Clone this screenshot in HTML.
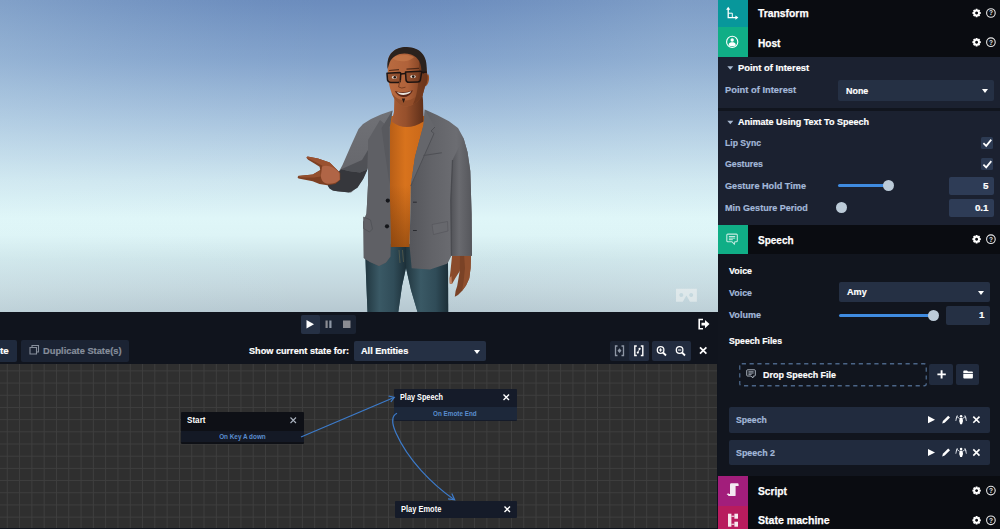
<!DOCTYPE html>
<html lang="en">
<head>
<meta charset="utf-8">
<title>Host editor</title>
<style>
*{box-sizing:border-box;margin:0;padding:0}
html,body{width:1000px;height:529px;overflow:hidden;background:#10141d}
body{position:relative;font-family:"Liberation Sans",sans-serif;font-weight:bold;color:#fff;font-size:11px}
.abs{position:absolute}
#viewport{left:0;top:0;width:718px;height:312px;overflow:hidden;
 background:linear-gradient(90deg,rgba(224,247,248,0.193) 0.00%,rgba(224,247,248,0.158) 6.27%,rgba(224,247,248,0.123) 12.53%,rgba(224,247,248,0.091) 18.80%,rgba(224,247,248,0.061) 25.07%,rgba(224,247,248,0.035) 31.34%,rgba(224,247,248,0.016) 37.60%,rgba(224,247,248,0.004) 43.87%,rgba(224,247,248,0.000) 50.14%,rgba(224,247,248,0.004) 56.41%,rgba(224,247,248,0.017) 62.67%,rgba(224,247,248,0.036) 68.94%,rgba(224,247,248,0.062) 75.21%,rgba(224,247,248,0.092) 81.48%,rgba(224,247,248,0.125) 87.74%,rgba(224,247,248,0.160) 94.01%),linear-gradient(180deg,#6b8cbd 0%,#6e8fbf 2.6%,#83a3cc 19.2%,#a7c3de 38.5%,#cde5ef 57.7%,#dff6f8 70%,#ddf4f6 75.3%,#cde4e9 83.3%,#c2d5dc 93%,#b6c8d1 100%)}
#playbar{left:0;top:312px;width:718px;height:26px;background:#10141d}
#toolbar{left:0;top:338px;width:718px;height:26px;background:#10141d}
#graph{left:0;top:364px;width:717px;height:164px;background-color:#2f2f2f;
 background-image:linear-gradient(90deg,#3e3e3e 1px,transparent 1px),linear-gradient(180deg,#3e3e3e 1px,transparent 1px);
 background-size:12.3px 12.2px;background-position:6.8px 6.4px;overflow:hidden}
#panel{left:718px;top:0;width:282px;height:529px;background:#10141d;overflow:hidden}
.hdr{left:0;width:282px;height:29.5px;background:#0a0c11}
.hdr .ic{position:absolute;left:0;top:0;width:30px;height:100%}
.hdr .tt{position:absolute;left:40px;top:1.5px;line-height:29px;font-size:11.5px;color:#fff;-webkit-text-stroke:.25px #fff}
.sec{left:0;width:282px;background:#1b2130}
.lbl{position:absolute;color:#a3b8d9;font-size:9.8px;-webkit-text-stroke:.2px #a3b8d9;line-height:14px;white-space:nowrap}
.hd{position:absolute;color:#fff;font-size:9.8px;-webkit-text-stroke:.2px #fff;line-height:14px;white-space:nowrap}
.sel{position:absolute;background:#253044;border-radius:2px;color:#fff;font-size:9.8px;-webkit-text-stroke:.2px #fff}
.sel>span{position:absolute;left:8px;top:0}
.sel i{position:absolute;right:6px;width:0;height:0;border-left:3.5px solid transparent;border-right:3.5px solid transparent;border-top:4px solid #fff}
.num{position:absolute;background:#2e3c56;border-radius:2px;color:#fff;font-size:9.8px;-webkit-text-stroke:.2px #fff;text-align:right;padding-right:5px}
.trk{position:absolute;height:3px;border-radius:2px;background:#3f8be0}
.thumb{position:absolute;width:11px;height:11px;border-radius:50%;background:#bccbd8}
.chk{position:absolute;width:12px;height:12px;background:#2c3a52;border-radius:1.5px}
.btn{position:absolute;background:#1f2838;border-radius:2px}
.node{position:absolute;background:#0e1016;border-radius:1px}
.node .t{position:absolute;left:6px;top:0;font-size:9px;color:#fff;white-space:nowrap}
.node .tr{position:absolute;left:0;right:0;font-size:7.5px;color:#5b8ed0;text-align:center;white-space:nowrap}
.x{display:inline-block;transform-origin:0 50%;transform:scaleX(var(--k,1));white-space:nowrap}
.xc{display:inline-block;transform-origin:50% 50%;transform:scaleX(var(--k,1));white-space:nowrap}
svg{position:absolute;overflow:visible}
</style>
</head>
<body>
<!-- 3D viewport -->
<div id="viewport" class="abs">
<!--CHARACTER-->
<svg style="left:0;top:0" width="718" height="312" viewBox="0 0 718 312">
<defs>
<linearGradient id="gj" x1="0" y1="0" x2="1" y2="0"><stop offset="0" stop-color="#55565b"/><stop offset=".35" stop-color="#626368"/><stop offset=".75" stop-color="#6c6d72"/><stop offset="1" stop-color="#5c5d62"/></linearGradient>
<linearGradient id="gjl" x1="0" y1="0" x2="0" y2="1"><stop offset="0" stop-color="#707176"/><stop offset=".5" stop-color="#64656a"/><stop offset="1" stop-color="#4e4f54"/></linearGradient>
<linearGradient id="gjs" x1="0" y1="0" x2="1" y2="0"><stop offset="0" stop-color="#505156"/><stop offset=".4" stop-color="#696a6f"/><stop offset="1" stop-color="#55565b"/></linearGradient>
<linearGradient id="gsh" x1="0" y1="0" x2="1" y2="0"><stop offset="0" stop-color="#b65d16"/><stop offset=".45" stop-color="#d8731d"/><stop offset="1" stop-color="#c9681a"/></linearGradient>
<linearGradient id="gjn" x1="0" y1="0" x2="1" y2="0"><stop offset="0" stop-color="#21363f"/><stop offset=".35" stop-color="#3a5965"/><stop offset=".7" stop-color="#304c58"/><stop offset="1" stop-color="#1c2f38"/></linearGradient>
<linearGradient id="gsk" x1="0" y1="0" x2="1" y2="0"><stop offset="0" stop-color="#b96b40"/><stop offset=".5" stop-color="#b0623a"/><stop offset=".8" stop-color="#8a4827"/><stop offset="1" stop-color="#6b361d"/></linearGradient>
<linearGradient id="gnk" x1="0" y1="0" x2="1" y2="0"><stop offset="0" stop-color="#a85c34"/><stop offset=".45" stop-color="#96502c"/><stop offset="1" stop-color="#5e2f19"/></linearGradient><linearGradient id="gnk2" x1="0" y1="0" x2="0" y2="1"><stop offset="0" stop-color="#4a2210" stop-opacity=".75"/><stop offset=".6" stop-color="#4a2210" stop-opacity="0"/></linearGradient>
<linearGradient id="ghd" x1="0" y1="0" x2="0" y2="1"><stop offset="0" stop-color="#b36638"/><stop offset="1" stop-color="#6b361c"/></linearGradient>
<linearGradient id="gshd" x1="0" y1="0" x2="0" y2="1"><stop offset="0" stop-color="#5a2a06" stop-opacity="0"/><stop offset="1" stop-color="#5a2a06" stop-opacity=".45"/></linearGradient>
</defs>
<!-- jeans -->
<path d="M365 244 L366 275 L367.5 312 L398.3 312 L402 286 L406 268 L411 290 L417.5 312 L448.2 312 L448 262 L447 244 Z" fill="#3a5a69"/>
<path d="M365 244 L366 275 L367.5 312 L398.3 312 L402 286 L406 268 L406 244 Z" fill="url(#gjn)"/>
<path d="M406 244 L406 268 L411 290 L417.5 312 L448.2 312 L448 262 L447 244 Z" fill="url(#gjn)"/>
<path d="M402.5 250 L403.5 262 M399 250 L400 263" stroke="#8a7d55" stroke-width=".6" fill="none" opacity=".7"/>
<!-- shirt -->
<path d="M389 116 L425 116 L424 130 L415.5 157 L411 185 L409.6 247 L390.4 247 L389.6 185 L389.6 125 Z" fill="url(#gsh)"/>
<path d="M389.6 185 L411 185 L409.6 247 L390.4 247 Z" fill="url(#gshd)"/>
<!-- right hand (hanging) -->
<path d="M456 254 L471 254 L470.6 268 L469.3 278.2 L466 285.5 L462 291 L458 295 L454.8 296.8 L455.6 291 L457.2 286 L459.6 271.8 Z" fill="#7a4226"/>
<path d="M464 254 L471 254 L470.6 268 L469.3 278.2 L466 285.5 L462 291 L463.5 282 L465 268 Z" fill="#8f4f2e"/>
<path d="M452.2 254 L460 254 L459.8 271 L455.4 278 L452 284 L449.8 283.4 L449.6 278 L450.6 270 Z" fill="#8a4b2b"/>
<path d="M452 284 L449.8 283.4 L449.6 278 L451.4 276 Z" fill="#c08363"/>
<!-- neck -->
<path d="M394.5 92 L394 112 L391.5 121.5 Q406 132.5 423.6 121.5 L423 100 L421 84 Z" fill="url(#gnk)"/>
<path d="M394.5 92 L394 112 L423.3 112 L423 100 L421 84 Z" fill="url(#gnk2)"/>
<!-- jacket right half -->
<path d="M424.8 109.5 L437 115 L449 121.3 L458 128 L463.5 138 L467.5 152 L470.3 171 L471.6 213.5 L472 255.8 L451.4 255.8 L448.3 262 L447 263.8 L430 269.4 L411.7 268.3 L409.6 246.5 L410.8 185 L415 156.7 L419.5 140 L423.5 125 Z" fill="url(#gj)"/>
<path d="M452.5 160 L450.5 200 L451.4 255.8 L472 255.8 L471.6 213.5 L470.3 171 L467.5 152 L463.5 138 Z" fill="url(#gjs)"/>
<path d="M452.5 160 L450.8 200 L451.4 255.8" stroke="#45464b" stroke-width="1.2" fill="none" opacity=".8"/>
<!-- jacket left half -->
<path d="M392.5 110.5 L381 114.5 L371 119 L363 124 L358.5 129 L351 145.5 L342.5 165 L335.5 178 L328.2 185.3 L330 188.5 L337 191.3 L351 192.6 L357 187.5 L362.5 180 L368 168 L368 185 L366.5 213.5 L363.4 222 L363.8 258 L370 262 L379 266 L386 262.5 L390.4 256.5 L390.6 246 L389.8 185 L389.6 128 Z" fill="url(#gjl)"/>
<path d="M368 140 L368 185 L366.5 213.5 L363.4 222 L363.8 258 L370 262 L379 266 L386 262.5 L390.4 256.5 L390.6 246 L389.8 185 L389.6 128 L380 120 Z" fill="#5f6065"/>
<path d="M341.2 169.3 L338.5 172 L335 178 L327.6 185.5 L329.5 188.6 L333 190.8 L349 192.5 L357.5 187.8 L363.5 178.5 L367.5 169.5 L360 172.5 L350 171.2 Z" fill="#36373c"/>
<path d="M341.2 169.3 L350 171.2 L360 172.5 L367.5 169.5 L368 150 L362 160 Z" fill="#4a4b50" opacity=".8"/>
<!-- lapels -->
<path d="M392.5 110.5 L389.6 128 L389.8 186 L384.5 150 L381.5 128 Z" fill="#58595e"/>
<path d="M424.8 109.5 L435 127 L431 131 L434 133.5 L410.8 186 L415 156.7 L423.5 125 Z" fill="#65666b"/>
<path d="M435 127 L431 131 L434 133.5 L410.8 186" stroke="#4a4b50" stroke-width=".8" fill="none"/>
<!-- pockets, buttons -->
<path d="M423.5 155.5 L441.8 152.8" stroke="#4f5055" stroke-width="1.1"/>
<path d="M363.6 217 L370.5 220 L372.5 229 L369.5 232 L363.6 228.5 Z" fill="#606166" stroke="#4a4b50" stroke-width=".6"/>
<path d="M432 224.5 L447.5 221.5 L448 231 L433.5 234.5 Z" fill="#67686d" stroke="#505156" stroke-width=".5"/>
<circle cx="387.8" cy="200.6" r="2.1" fill="#15161a"/><circle cx="387" cy="226.3" r="2.1" fill="#15161a"/>
<path d="M413 202.2 h3.8 M413 230.5 h3.8" stroke="#2a2b30" stroke-width="1"/>
<!-- left hand (extended) -->
<path d="M340.2 172.9 L329.7 162.5 L318 158.6 L307.5 156.4 L306.4 157.8 L308.1 159.7 L314 163.2 L319.6 166.8 L320.2 170 L312.7 174.4 L298.5 175.8 L297.5 177.2 L298.5 178.5 L305 179.7 L312.7 181.2 L319.5 184 L327.4 185.2 L335.3 184 L340.2 180 Z" fill="#7d3f22"/>
<path d="M340.2 172.9 L329.7 162.5 L318 158.6 L307.5 156.4 L306.4 157.8 L314 161.2 L322 165.4 L326 169 Z" fill="#9a5130"/>
<path d="M322 166.5 C328 164 336 168 339.6 173.5 L339.8 179.5 C337 183 331 184.6 326 183.4 C322 182 320.5 178 321 174.5 Z" fill="#b06546"/>
<path d="M320.2 170.4 L312.7 174.6 L300 176 L298.2 177.2 L306 177.6 L314 177.4 L321 176.6 Z" fill="#94502f"/>
<!-- head -->
<path d="M428 74 C430 76 429.3 84 425.5 86.5 L424 80 Z" fill="#9a5229"/>
<path d="M388 63 C388 51 398 47.2 407 47.4 C418 48 426 54 426 66 L427.2 74 C428 79 427 84 425 86.5 L422.5 95.5 C418.5 102 411 107 405 106.5 C399.5 106 394 100 391.3 92 C388.3 84 387.2 73 388 63 Z" fill="url(#gsk)"/>
<path d="M391.3 92 C394 100 399.5 106 405 106.5 C411 107 418.5 102 422.5 95.5 L424.5 87 C419 96 412 100.5 405.5 100.5 C399 100.5 394 96.5 391.3 92 Z" fill="#8a4826" opacity=".7"/>
<path d="M419 56 C424 58 426 62 426 66 L427.2 74 C428 79 427 84 425 86.5 L422.5 95.5 C420 99.5 416.5 102.5 413 104.5 C417 96 419.5 84 419 56 Z" fill="#6a341b" opacity=".7"/>
<path d="M392 58 C397 54.5 408 54 414 57 C410 62 398 63 392 58 Z" fill="#c97d4d" opacity=".6"/>
<!-- hair -->
<path d="M387.6 69 C385.8 53 396 46.6 407 47 C419.5 47.5 428 55 426.6 71 L423.6 73.8 L421.4 72 C421.6 64 419 57.5 411 54.6 C402 52 393.5 54.5 389.6 62.5 Z" fill="#2b221d"/>
<!-- glasses -->
<g fill="#5a2d18" fill-opacity=".4" stroke="#1e1411" stroke-width="1.5" stroke-linejoin="round">
<path d="M387 73.3 L399.6 72.4 Q400.8 72.4 400.8 73.6 L400.3 80.6 Q400 82.6 398 82.6 L390.5 82.4 Q388 82.2 387.5 80 Z"/>
<path d="M405.5 72 L420.6 71.2 Q421.8 71.2 421.6 72.6 L420.4 80 Q420 82 417.8 82 L408.8 82.2 Q406.4 82.2 406 80 Z"/>
</g>
<ellipse cx="394.3" cy="77.3" rx="2.6" ry="1.5" fill="#e6ded6"/><circle cx="394.8" cy="77.3" r="1.3" fill="#1d120d"/><ellipse cx="413" cy="76.6" rx="2.8" ry="1.5" fill="#e6ded6"/><circle cx="413.2" cy="76.6" r="1.3" fill="#1d120d"/>
<path d="M400.8 74 L405.5 73.6 M421.6 72.4 L427 72" stroke="#1e1411" stroke-width="1.5" fill="none"/>
<path d="M389 70.5 L399 69.6 M406.5 69.2 L419 68.4" stroke="#3a1d10" stroke-width="1.2" fill="none" opacity=".8"/>
<!-- nose / mouth -->
<path d="M400 80 L398.6 87 Q401.5 89 405.5 87.2" stroke="#7a3f22" stroke-width="1" fill="none"/>
<path d="M394.8 91 Q403.5 94 413 90.2 Q410 97.2 403.2 97 Q397.5 96.6 394.8 91 Z" fill="#5a2414"/>
<path d="M396.8 91.9 Q403.6 94.2 411.3 91.3 Q409.5 94.6 403.4 94.9 Q399 94.8 396.8 91.9 Z" fill="#e9e4dc"/>
<path d="M401.8 98.6 L405.2 98.6 L403.6 103 Z" fill="#2b1a12"/>
<!-- VR icon -->
<path d="M676 288.8 H696.9 V301.7 H690 L686.4 295.4 L682.8 301.7 H676 Z M681.3 292.9 a2 2 0 1 0 .01 0 Z M691.2 292.9 a2 2 0 1 0 .01 0 Z" fill="#eef2f2" fill-rule="evenodd" opacity=".6"/>
</svg>
</div>

<!-- play bar -->
<div id="playbar" class="abs">
  <div class="btn" style="left:301px;top:2.5px;width:55px;height:19.5px;background:#1a2231"></div>
  <div class="btn" style="left:301px;top:2.5px;width:18.5px;height:19.5px;background:#263145"></div>
  <svg style="left:0;top:0" width="718" height="26">
    <path d="M306.5 8 L314 12.2 L306.5 16.5 Z" fill="#fff"/>
    <rect x="325.5" y="8.5" width="2.2" height="7.5" fill="#8b8c92"/><rect x="329.3" y="8.5" width="2.2" height="7.5" fill="#8e97a5"/>
    <rect x="343" y="8.5" width="7.5" height="7.5" fill="#8b8c92"/>
    <g fill="none" stroke="#fff" stroke-width="1.6"><path d="M703 7.5 H699.2 V16.8 H703"/></g>
    <path d="M701.5 10.8 H705 V8 L709.5 12.1 L705 16.3 V13.5 H701.5 Z" fill="#fff"/>
  </svg>
</div>

<!-- toolbar -->
<div id="toolbar" class="abs">
  <div class="btn" style="left:-4px;top:2px;width:21px;height:21.5px;background:#1f2a3d"></div>
  <div class="abs" style="left:0;top:2.5px;line-height:20.5px;font-size:9.8px;-webkit-text-stroke:.2px #fff;color:#fff">te</div>
  <div class="btn" style="left:21px;top:2px;width:107.5px;height:21.5px;background:#1b2333"></div>
  <div class="abs" style="left:42.5px;top:2.5px;line-height:20.5px;font-size:9.8px;-webkit-text-stroke:.2px #868e9b;color:#868e9b;white-space:nowrap"><span class="x" style="--w:78.5;--k:0.9486">Duplicate State(s)</span></div>
  <div class="abs" style="left:249px;top:2.5px;line-height:20.5px;font-size:9.8px;-webkit-text-stroke:.2px #fff;color:#fff;white-space:nowrap"><span class="x" style="--w:100;--k:0.9324">Show current state for:</span></div>
  <div class="sel" style="left:353.5px;top:2.5px;width:132px;height:20.5px;line-height:20.5px"><span style="left:7px"><span class="x" style="--w:47.3;--k:0.9340">All Entities</span></span><i style="top:9px"></i></div>
  <div class="btn" style="left:610px;top:3px;width:39px;height:19.5px;background:#1a2231"></div>
  <div class="btn" style="left:629px;top:3px;width:20px;height:19.5px;background:#222c3f"></div>
  <div class="btn" style="left:652px;top:3px;width:38.5px;height:19.5px;background:#222c3f"></div>
  <svg style="left:0;top:0" width="718" height="26">
    <g fill="none" stroke="#868e9b" stroke-width="1.1"><path d="M30 9.5 h6.5 v6.5 h-6.5 z"/><path d="M32 9.5 v-2 h6.5 v6.5 h-2"/></g>
    <!-- fit icons -->
    <g fill="none" stroke="#8e97a5" stroke-width="1.3"><path d="M617.5 8 h-2 v9.5 h2 M621.5 8 h2 v9.5 h-2"/></g>
    <path d="M619.5 10.3 l2 2.4 l-2 2.4 l-2 -2.4 z" fill="#8e97a5"/>
    <g fill="none" stroke="#fff" stroke-width="1.4"><path d="M636.8 8 h-2 v9.5 h2 M640.8 8 h2 v9.5 h-2"/></g>
    <circle cx="639.6" cy="10.8" r="1.1" fill="#fff"/><circle cx="637.8" cy="14.6" r="1.1" fill="#fff"/><path d="M639.6 10.8 L637.8 14.6" stroke="#fff" stroke-width=".8"/>
    <!-- zoom -->
    <g fill="none" stroke="#fff" stroke-width="1.3"><circle cx="660.6" cy="12" r="3.3"/><path d="M663 14.5 L666 17.5" stroke-width="1.8"/><path d="M658.9 12 h3.4 M660.6 10.3 v3.4" stroke-width="1"/>
    <circle cx="679.6" cy="12" r="3.3"/><path d="M682 14.5 L685 17.5" stroke-width="1.8"/><path d="M677.9 12 h3.4" stroke-width="1"/></g>
    <path d="M700 9.3 L706.4 15.7 M706.4 9.3 L700 15.7" stroke="#fff" stroke-width="1.7" fill="none"/>
  </svg>
</div>

<!-- graph -->
<div id="graph" class="abs">
  <div class="node" style="left:181px;top:47.5px;width:122.5px;height:32px">
    <div class="t" style="line-height:17px"><span class="x" style="--w:18.5;--k:0.9018">Start</span></div>
    <div class="tr" style="top:19.5px;height:11px;line-height:11px;background:#141925"><span class="xc" style="--w:46.6;--k:0.8492">On Key A down</span></div>
    <svg style="left:108.5px;top:5.5px" width="7" height="7"><path d="M.5 .5 L6 6 M6 .5 L.5 6" stroke="#aab2be" stroke-width="1.1"/></svg>
  </div>
  <div class="node" style="left:394px;top:24.5px;width:122.5px;height:32px;background:#151b29">
    <div class="t" style="line-height:17px"><span class="x" style="--w:43;--k:0.8108">Play Speech</span></div>
    <div class="tr" style="top:18.5px;height:12.5px;line-height:14px;background:#1d283a"><span class="xc" style="--w:43.6;--k:0.8438">On Emote End</span></div>
    <svg style="left:108.5px;top:5.5px" width="7" height="7"><path d="M.5 .5 L6 6 M6 .5 L.5 6" stroke="#fff" stroke-width="1.4"/></svg>
  </div>
  <div class="node" style="left:395px;top:137px;width:122px;height:16.5px;background:#151b29">
    <div class="t" style="line-height:16.5px"><span class="x" style="--w:40.3;--k:0.8304">Play Emote</span></div>
    <svg style="left:108.5px;top:5px" width="7" height="7"><path d="M.5 .5 L6 6 M6 .5 L.5 6" stroke="#fff" stroke-width="1.4"/></svg>
  </div>
  <svg style="left:0;top:-364px" width="718" height="529">
    <g fill="none" stroke="#3c7bcb" stroke-width="1.2">
      <path d="M301 437 L394 397.5"/><path d="M388.5 396 L394.3 397.3 L390.8 402"/>
      <path d="M397 413.2 C391 416 392 424 396 433 C408 460 432 484 454 499.5"/><path d="M448 498.8 L454.6 499.8 L451.8 493.6"/>
    </g>
  </svg>
</div>

<!-- right inspector panel -->
<div id="panel" class="abs">
<!--PANEL-->
  <!-- Transform -->
  <div class="hdr abs" style="top:-2.5px"><div class="ic" style="background:#08979b"></div><div class="tt"><span class="x" style="--w:50.6;--k:0.8996">Transform</span></div></div>
  <!-- Host -->
  <div class="hdr abs" style="top:27px"><div class="ic" style="background:#10ae86"></div><div class="tt"><span class="x" style="--w:22.5;--k:0.8802">Host</span></div></div>
  <div class="sec abs" style="top:56.5px;height:51px">
    <div class="hd" style="left:19.5px;top:4px"><span class="x" style="--w:71.2;--k:0.9547">Point of Interest</span></div>
    <div class="lbl" style="left:6.5px;top:26px"><span class="x" style="--w:71.2;--k:0.9547">Point of Interest</span></div>
    <div class="sel" style="left:120px;top:23px;width:155.5px;height:21px;line-height:21px"><span><span class="x" style="--w:22.3;--k:0.9102">None</span></span><i style="top:9px"></i></div>
  </div>
  <div class="abs" style="left:0;top:107.5px;width:282px;height:3px;background:#11151e"></div>
  <div class="sec abs" style="top:110.5px;height:114px">
    <div class="hd" style="left:19.5px;top:4.5px"><span class="x" style="--w:131;--k:0.9208">Animate Using Text To Speech</span></div>
    <div class="lbl" style="left:6.5px;top:25.5px"><span class="x" style="--w:36;--k:0.8814">Lip Sync</span></div>
    <div class="lbl" style="left:6.5px;top:46.5px"><span class="x" style="--w:38;--k:0.8944">Gestures</span></div>
    <div class="lbl" style="left:6.5px;top:68.5px"><span class="x" style="--w:81;--k:0.9317">Gesture Hold Time</span></div>
    <div class="lbl" style="left:6.5px;top:90px"><span class="x" style="--w:82.8;--k:0.9218">Min Gesture Period</span></div>
    <div class="chk" style="left:263px;top:26px"></div>
    <div class="chk" style="left:263px;top:47.5px"></div>
    <div class="trk" style="left:120px;top:73.5px;width:48px"></div>
    <div class="thumb" style="left:164.5px;top:69.5px"></div>
    <div class="thumb" style="left:118px;top:91px"></div>
    <div class="num" style="left:231px;top:66px;width:44.5px;height:18.5px;line-height:18.5px">5</div>
    <div class="num" style="left:231px;top:88px;width:44.5px;height:18.5px;line-height:18.5px">0.1</div>
  </div>
  <!-- Speech -->
  <div class="hdr abs" style="top:224.5px"><div class="ic" style="background:#10ae86"></div><div class="tt"><span class="x" style="--w:35.6;--k:0.8700">Speech</span></div></div>
  <div class="abs" style="left:0;top:254px;width:282px;height:222px;background:#11151e">
    <div class="hd" style="left:10.5px;top:10px"><span class="x" style="--w:23;--k:0.9047">Voice</span></div>
    <div class="lbl" style="left:10.5px;top:31.5px"><span class="x" style="--w:23;--k:0.9047">Voice</span></div>
    <div class="lbl" style="left:10.5px;top:54px"><span class="x" style="--w:32;--k:0.9229">Volume</span></div>
    <div class="hd" style="left:10.5px;top:80px"><span class="x" style="--w:53;--k:0.8847">Speech Files</span></div>
    <div class="sel" style="left:121px;top:28px;width:150.5px;height:20px;line-height:20px"><span><span class="x" style="--w:19.7;--k:0.9271">Amy</span></span><i style="top:9px"></i></div>
    <div class="trk" style="left:121px;top:59.5px;width:92px"></div>
    <div class="thumb" style="left:210px;top:55.5px"></div>
    <div class="num" style="left:227.5px;top:52px;width:44px;height:18.5px;line-height:18.5px;background:#253044">1</div>
    <svg style="left:21px;top:108.5px" width="188" height="23.5"><rect x=".75" y=".75" width="186.5" height="22" rx="2" fill="none" stroke="#4b6587" stroke-width="1.3" stroke-dasharray="4.2 3.6"/></svg>
    <div class="hd" style="left:44.5px;top:113.5px"><span class="x" style="--w:73;--k:0.9121">Drop Speech File</span></div>
    <div class="btn" style="left:211px;top:109.5px;width:24px;height:21.5px;background:#212b3e"></div>
    <div class="btn" style="left:237.5px;top:109.5px;width:23.5px;height:21.5px;background:#212b3e"></div>
    <div class="btn" style="left:10.5px;top:153px;width:261px;height:25.5px;background:#212b3e"></div>
    <div class="btn" style="left:10.5px;top:186px;width:261px;height:25px;background:#212b3e"></div>
    <div class="lbl" style="left:18px;top:158.5px"><span class="x" style="--w:30.8;--k:0.8835">Speech</span></div>
    <div class="lbl" style="left:18px;top:191.5px"><span class="x" style="--w:39;--k:0.9063">Speech 2</span></div>
  </div>
  <!-- Script -->
  <div class="hdr abs" style="top:476px;height:30px"><div class="ic" style="background:#a21e7b"></div><div class="tt" style="top:.5px"><span class="x" style="--w:29;--k:0.8897">Script</span></div></div>
  <div class="hdr abs" style="top:506px"><div class="ic" style="background:#b81c5e"></div><div class="tt" style="top:-.5px"><span class="x" style="--w:71.7;--k:0.9194">State machine</span></div></div>
  <svg style="left:0;top:0" width="282" height="529" id="picons"><path d="M262.81 12.15 L262.81 13.85 L261.56 14.22 L261.55 14.23 L262.18 15.38 L260.98 16.58 L259.83 15.95 L259.82 15.96 L259.45 17.21 L257.75 17.21 L257.38 15.96 L257.37 15.95 L256.22 16.58 L255.02 15.38 L255.65 14.23 L255.64 14.22 L254.39 13.85 L254.39 12.15 L255.64 11.78 L255.65 11.77 L255.02 10.62 L256.22 9.42 L257.37 10.05 L257.38 10.04 L257.75 8.79 L259.45 8.79 L259.82 10.04 L259.83 10.05 L260.98 9.42 L262.18 10.62 L261.55 11.77 L261.56 11.78 Z M258.60 11.55 a1.45 1.45 0 1 0 0.01 0 Z" fill="#fff" fill-rule="evenodd"/>
<circle cx="272.9" cy="13.0" r="4.3" fill="none" stroke="#e8e8e8" stroke-width="1.1"/><text x="272.9" y="15.3" font-family="Liberation Sans,sans-serif" font-weight="bold" font-size="6.5" fill="#e8e8e8" text-anchor="middle">?</text>
<path d="M262.81 41.35 L262.81 43.05 L261.56 43.42 L261.55 43.43 L262.18 44.58 L260.98 45.78 L259.83 45.15 L259.82 45.16 L259.45 46.41 L257.75 46.41 L257.38 45.16 L257.37 45.15 L256.22 45.78 L255.02 44.58 L255.65 43.43 L255.64 43.42 L254.39 43.05 L254.39 41.35 L255.64 40.98 L255.65 40.97 L255.02 39.82 L256.22 38.62 L257.37 39.25 L257.38 39.24 L257.75 37.99 L259.45 37.99 L259.82 39.24 L259.83 39.25 L260.98 38.62 L262.18 39.82 L261.55 40.97 L261.56 40.98 Z M258.60 40.75 a1.45 1.45 0 1 0 0.01 0 Z" fill="#fff" fill-rule="evenodd"/>
<circle cx="272.9" cy="42.2" r="4.3" fill="none" stroke="#e8e8e8" stroke-width="1.1"/><text x="272.9" y="44.5" font-family="Liberation Sans,sans-serif" font-weight="bold" font-size="6.5" fill="#e8e8e8" text-anchor="middle">?</text>
<path d="M262.81 238.35 L262.81 240.05 L261.56 240.42 L261.55 240.43 L262.18 241.58 L260.98 242.78 L259.83 242.15 L259.82 242.16 L259.45 243.41 L257.75 243.41 L257.38 242.16 L257.37 242.15 L256.22 242.78 L255.02 241.58 L255.65 240.43 L255.64 240.42 L254.39 240.05 L254.39 238.35 L255.64 237.98 L255.65 237.97 L255.02 236.82 L256.22 235.62 L257.37 236.25 L257.38 236.24 L257.75 234.99 L259.45 234.99 L259.82 236.24 L259.83 236.25 L260.98 235.62 L262.18 236.82 L261.55 237.97 L261.56 237.98 Z M258.60 237.75 a1.45 1.45 0 1 0 0.01 0 Z" fill="#fff" fill-rule="evenodd"/>
<circle cx="272.9" cy="239.2" r="4.3" fill="none" stroke="#e8e8e8" stroke-width="1.1"/><text x="272.9" y="241.5" font-family="Liberation Sans,sans-serif" font-weight="bold" font-size="6.5" fill="#e8e8e8" text-anchor="middle">?</text>
<path d="M262.81 489.75 L262.81 491.45 L261.56 491.82 L261.55 491.83 L262.18 492.98 L260.98 494.18 L259.83 493.55 L259.82 493.56 L259.45 494.81 L257.75 494.81 L257.38 493.56 L257.37 493.55 L256.22 494.18 L255.02 492.98 L255.65 491.83 L255.64 491.82 L254.39 491.45 L254.39 489.75 L255.64 489.38 L255.65 489.37 L255.02 488.22 L256.22 487.02 L257.37 487.65 L257.38 487.64 L257.75 486.39 L259.45 486.39 L259.82 487.64 L259.83 487.65 L260.98 487.02 L262.18 488.22 L261.55 489.37 L261.56 489.38 Z M258.60 489.15 a1.45 1.45 0 1 0 0.01 0 Z" fill="#fff" fill-rule="evenodd"/>
<circle cx="272.9" cy="490.6" r="4.3" fill="none" stroke="#e8e8e8" stroke-width="1.1"/><text x="272.9" y="492.9" font-family="Liberation Sans,sans-serif" font-weight="bold" font-size="6.5" fill="#e8e8e8" text-anchor="middle">?</text>
<path d="M262.81 519.45 L262.81 521.15 L261.56 521.52 L261.55 521.53 L262.18 522.68 L260.98 523.88 L259.83 523.25 L259.82 523.26 L259.45 524.51 L257.75 524.51 L257.38 523.26 L257.37 523.25 L256.22 523.88 L255.02 522.68 L255.65 521.53 L255.64 521.52 L254.39 521.15 L254.39 519.45 L255.64 519.08 L255.65 519.07 L255.02 517.92 L256.22 516.72 L257.37 517.35 L257.38 517.34 L257.75 516.09 L259.45 516.09 L259.82 517.34 L259.83 517.35 L260.98 516.72 L262.18 517.92 L261.55 519.07 L261.56 519.08 Z M258.60 518.85 a1.45 1.45 0 1 0 0.01 0 Z" fill="#fff" fill-rule="evenodd"/>
<circle cx="272.9" cy="520.3" r="4.3" fill="none" stroke="#e8e8e8" stroke-width="1.1"/><text x="272.9" y="522.6" font-family="Liberation Sans,sans-serif" font-weight="bold" font-size="6.5" fill="#e8e8e8" text-anchor="middle">?</text>
<g fill="none" stroke="#fff" stroke-width="1.3"><path d="M10.2 9 V17.6 H18.5"/><path d="M10.2 13.2 H14.3 V17.6" stroke-width="1"/></g><path d="M10.2 6.8 L12.3 9.8 H8.1 Z M20.4 17.6 L17.4 15.5 V19.7 Z" fill="#fff"/>
<circle cx="14.2" cy="41.9" r="5.6" fill="none" stroke="#fff" stroke-width="1.1"/><circle cx="14.2" cy="40" r="1.7" fill="#fff"/><path d="M10.6 45.2 C10.8 42.6 12.6 42.3 14.2 42.3 C15.8 42.3 17.6 42.6 17.8 45.2 C16 46.6 12.4 46.6 10.6 45.2 Z" fill="#fff"/>
<g transform="translate(8.3 233.5) scale(1.000)" opacity="0.75"><path d="M1.5 .6 H10 Q11 .6 11 1.6 V7.2 Q11 8.2 10 8.2 H8.6 L8 10.6 L5.6 8.2 H1.5 Q.5 8.2 .5 7.2 V1.6 Q.5 .6 1.5 .6 Z" fill="none" stroke="#fff" stroke-width="1.1"/><path d="M2.6 3 H8.9 M2.6 4.6 H8.9 M2.6 6.2 H6.5" stroke="#fff" stroke-width="1" fill="none"/></g>
<g transform="translate(28.3 369.3) scale(0.820)" opacity="0.9"><path d="M1.5 .6 H10 Q11 .6 11 1.6 V7.2 Q11 8.2 10 8.2 H8.6 L8 10.6 L5.6 8.2 H1.5 Q.5 8.2 .5 7.2 V1.6 Q.5 .6 1.5 .6 Z" fill="none" stroke="#c9d2de" stroke-width="1.1"/><path d="M2.6 3 H8.9 M2.6 4.6 H8.9 M2.6 6.2 H6.5" stroke="#c9d2de" stroke-width="1" fill="none"/></g>
<path d="M223.6 370.2 V378.6 M219.4 374.4 H227.8" stroke="#fff" stroke-width="1.9" fill="none"/>
<path d="M245.3 371.4 Q245.3 370.5 246.2 370.5 H249 L250 371.6 H254 Q254.9 371.6 254.9 372.5 V373 H245.3 Z M245.3 373.8 H254.9 V377.6 Q254.9 378.5 254 378.5 H246.2 Q245.3 378.5 245.3 377.6 Z" fill="#fff"/>
<path d="M210 416.1 L217 419.7 L210 423.3 Z" fill="#fff"/>
<path d="M224.2 423.6 L224.9 421.0 L230.2 415.7 L232 417.5 L226.7 422.8 Z" fill="#fff"/>
<g fill="#fff"><circle cx="243.1" cy="416.3" r="1.3"/><path d="M241.7 417.9 h2.8 l.5 3.2 l-1 3.2 h-1.8 l-1 -3.2 z"/></g><g fill="none" stroke="#dfe3ea" stroke-width=".9"><path d="M241.5 418.5 l-2.7 -2 l-1 4.4 M244.7 418.5 l2.7 -2 l1 4.4 M239.4 415.4 l-1.2 3 M246.8 415.4 l1.2 3"/></g>
<path d="M255.3 416.6 L261.5 422.8 M261.5 416.6 L255.3 422.8" stroke="#fff" stroke-width="1.6" fill="none"/>
<path d="M210 448.9 L217 452.5 L210 456.1 Z" fill="#fff"/>
<path d="M224.2 456.4 L224.9 453.8 L230.2 448.5 L232 450.3 L226.7 455.6 Z" fill="#fff"/>
<g fill="#fff"><circle cx="243.1" cy="449.1" r="1.3"/><path d="M241.7 450.7 h2.8 l.5 3.2 l-1 3.2 h-1.8 l-1 -3.2 z"/></g><g fill="none" stroke="#dfe3ea" stroke-width=".9"><path d="M241.5 451.3 l-2.7 -2 l-1 4.4 M244.7 451.3 l2.7 -2 l1 4.4 M239.4 448.2 l-1.2 3 M246.8 448.2 l1.2 3"/></g>
<path d="M255.3 449.4 L261.5 455.6 M261.5 449.4 L255.3 455.6" stroke="#fff" stroke-width="1.6" fill="none"/>
<path d="M265.4 143.1 L268.2 145.9 L273.3 139.6" stroke="#fff" stroke-width="1.7" fill="none"/>
<path d="M265.4 164.6 L268.2 167.4 L273.3 161.1" stroke="#fff" stroke-width="1.7" fill="none"/>
<path d="M9.3 66.2 h6 l-3 3.6 z" fill="#a9bad1"/>
<path d="M9.3 120.7 h6 l-3 3.6 z" fill="#a9bad1"/>
<g fill="#f3e9f1"><path d="M12 484.6 Q12 483.3 13.3 483.3 H19.5 Q20.6 483.3 20.6 484.5 V486 H17.6 V495.6 Q17.6 496 17.2 496 H11 Q10 496 10 495 V494 H12 Z"/><path d="M8.6 494.2 l2 -1.3 v2.6 z"/></g>
<g fill="#f6e8ee"><rect x="10" y="513.7" width="3.4" height="13"/><rect x="16.4" y="513.7" width="3.6" height="5"/><rect x="16.4" y="521.7" width="3.6" height="5"/><path d="M13.4 515.7 h3 v1 h-3z M13.4 523.7 h3 v1 h-3z"/></g></svg>
</div>
</body>
</html>
